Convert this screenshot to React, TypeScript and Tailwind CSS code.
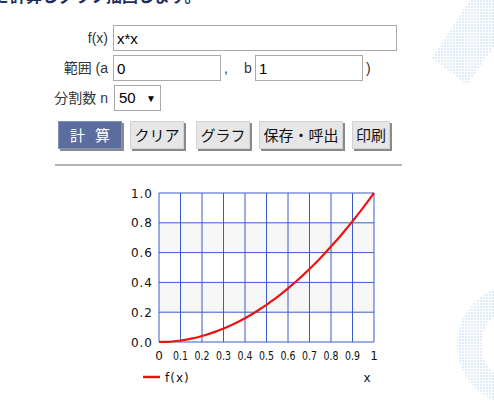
import React from "react";

const jp = "font-['Liberation_Sans','Noto_Sans_CJK_JP',sans-serif]";

// plot area inside the chart svg
const X0 = 39;
const X1 = 254;
const Y0 = 23;
const Y1 = 172;
const px = (v: number) => X0 + (X1 - X0) * v;
const py = (v: number) => Y1 - (Y1 - Y0) * v;

function Dots() {
  return (
    <svg className="absolute inset-0 pointer-events-none" width={494} height={412}>
      <defs>
        <pattern id="dots" width={3} height={3} patternUnits="userSpaceOnUse">
          <rect x={0} y={0} width={2} height={2} fill="#e0ebf9" />
        </pattern>
        <mask id="ring">
          <circle cx={517} cy={345} r={60} fill="white" />
          <circle cx={517} cy={345} r={36} fill="black" />
        </mask>
      </defs>
      <polygon points="470,0 432,58 467,85 530,-5" fill="url(#dots)" />
      <rect x={440} y={270} width={80} height={150} fill="url(#dots)" mask="url(#ring)" />
    </svg>
  );
}

function Chart() {
  const curve: string[] = [];
  for (let i = 0; i <= 50; i++) {
    const v = i / 50;
    curve.push(`${px(v).toFixed(1)},${py(v * v).toFixed(1)}`);
  }
  const xs = Array.from({ length: 11 }, (_, i) => i);
  const ys = [0, 1, 2, 3, 4, 5];
  return (
    <svg width={280} height={230} className="block" fontFamily="DejaVu Sans, sans-serif">
      <rect x={X0} y={py(0.4)} width={X1 - X0} height={py(0.2) - py(0.4)} fill="#f6f6f6" />
      <rect x={X0} y={py(0.8)} width={X1 - X0} height={py(0.6) - py(0.8)} fill="#f6f6f6" />
      {xs.map((i) => (
        <line key={"v" + i} x1={px(i / 10)} x2={px(i / 10)} y1={Y0} y2={Y1} stroke="#3a5bcc" strokeWidth={1} />
      ))}
      {ys.map((j) => (
        <line key={"h" + j} x1={X0} x2={X1} y1={py(j / 5)} y2={py(j / 5)} stroke="#3a5bcc" strokeWidth={1} />
      ))}
      {ys.map((j) => (
        <text key={"yl" + j} x={33} y={py(j / 5) + 4.5} fontSize={12} textAnchor="end" fill="#111" letterSpacing={1}>
          {(j / 5).toFixed(1)}
        </text>
      ))}
      {xs.map((i) => {
        const label = i === 0 ? "0" : i === 10 ? "1" : (i / 10).toFixed(1);
        return (
          <text
            key={"xl" + i}
            x={px(i / 10)}
            y={190}
            fontSize={12}
            textAnchor="middle"
            fill="#111"
            {...(label.length > 1 ? { textLength: 15, lengthAdjust: "spacingAndGlyphs" } : {})}
          >
            {label}
          </text>
        );
      })}
      <polyline points={curve.join(" ")} fill="none" stroke="#ee1111" strokeWidth={2.2} />
      <line x1={23} x2={40} y1={207} y2={207} stroke="#ee1111" strokeWidth={2.5} />
      <text x={45} y={212} fontSize={12} fill="#111" letterSpacing={1}>
        f(x)
      </text>
      <text x={247} y={212} fontSize={12} fill="#111" textAnchor="middle">
        x
      </text>
    </svg>
  );
}

function Btn({ children, w, primary }: { children: React.ReactNode; w: string; primary?: boolean }) {
  return (
    <button
      className={
        "h-[28px] flex items-center justify-center border text-[15px] leading-none shadow-[2px_2px_0_#8a8a8a] " +
        w +
        (primary ? " bg-[#5a6d9e] border-[#8090b8] text-white" : " bg-[#e6e6e6] border-[#d2d2d2] text-[#111]")
      }
    >
      {children}
    </button>
  );
}

function Label({ children }: { children: React.ReactNode }) {
  return (
    <span className="w-[53px] shrink-0 flex justify-end whitespace-nowrap text-[14px]">{children}</span>
  );
}

export default function App() {
  return (
    <div className={"relative w-[494px] h-[412px] overflow-hidden bg-white text-[#333] " + jp}>
      <Dots />
      <div className="h-[4px] overflow-hidden flex items-end">
        <div className="-ml-[6px] -mb-[1px] text-[16px] font-bold leading-none text-[#1d2c5c] whitespace-nowrap">
          を計算しグラフ描画します。
        </div>
      </div>

      <div className="relative pl-[55px] pt-[21px] flex flex-col gap-[4px]">
        <div className="flex items-center h-[26px]">
          <Label>f(x)</Label>
          <input
            readOnly
            value="x*x"
            className="ml-[5px] w-[284px] h-[26px] border border-[#a9a9a9] px-[3px] text-[15px] text-black outline-none"
          />
        </div>
        <div className="flex items-center h-[26px]">
          <Label>範囲 (a</Label>
          <input
            readOnly
            value="0"
            className="ml-[5px] w-[108px] h-[26px] border border-[#a9a9a9] px-[3px] text-[15px] text-black outline-none"
          />
          <span className="ml-[3px] w-[20px] shrink-0 text-[14px] self-end pb-[2px]">,</span>
          <span className="w-[10px] shrink-0 text-[14px]">b</span>
          <input
            readOnly
            value="1"
            className="ml-[1px] w-[108px] h-[26px] border border-[#a9a9a9] px-[3px] text-[15px] text-black outline-none"
          />
          <span className="ml-[3px] text-[14px]">)</span>
        </div>
        <div className="flex items-center h-[26px]">
          <Label>分割数 n</Label>
          <div className="ml-[6px] w-[47px] h-[26px] border border-[#a9a9a9] flex items-center justify-between px-[4px] text-[15px] text-black">
            <span>50</span>
            <span className="text-[10px]">▼</span>
          </div>
        </div>

        <div className="flex items-start mt-[6px] ml-[3px] h-[30px]">
          <Btn w="w-[64px]" primary>
            <span className="flex gap-[10px]">
              <span>計</span>
              <span>算</span>
            </span>
          </Btn>
          <div className="ml-[8px]">
            <Btn w="w-[54px]">クリア</Btn>
          </div>
          <div className="ml-[12px]">
            <Btn w="w-[54px]">グラフ</Btn>
          </div>
          <div className="ml-[9px]">
            <Btn w="w-[84px]">保存・呼出</Btn>
          </div>
          <div className="ml-[9px]">
            <Btn w="w-[38px]">印刷</Btn>
          </div>
        </div>
        <div className="mt-[9px] w-[347px] h-[2px] bg-[#b4b4b4]" />
      </div>

      <div className="relative pl-[120px] pt-[4px]">
        <Chart />
      </div>
    </div>
  );
}
